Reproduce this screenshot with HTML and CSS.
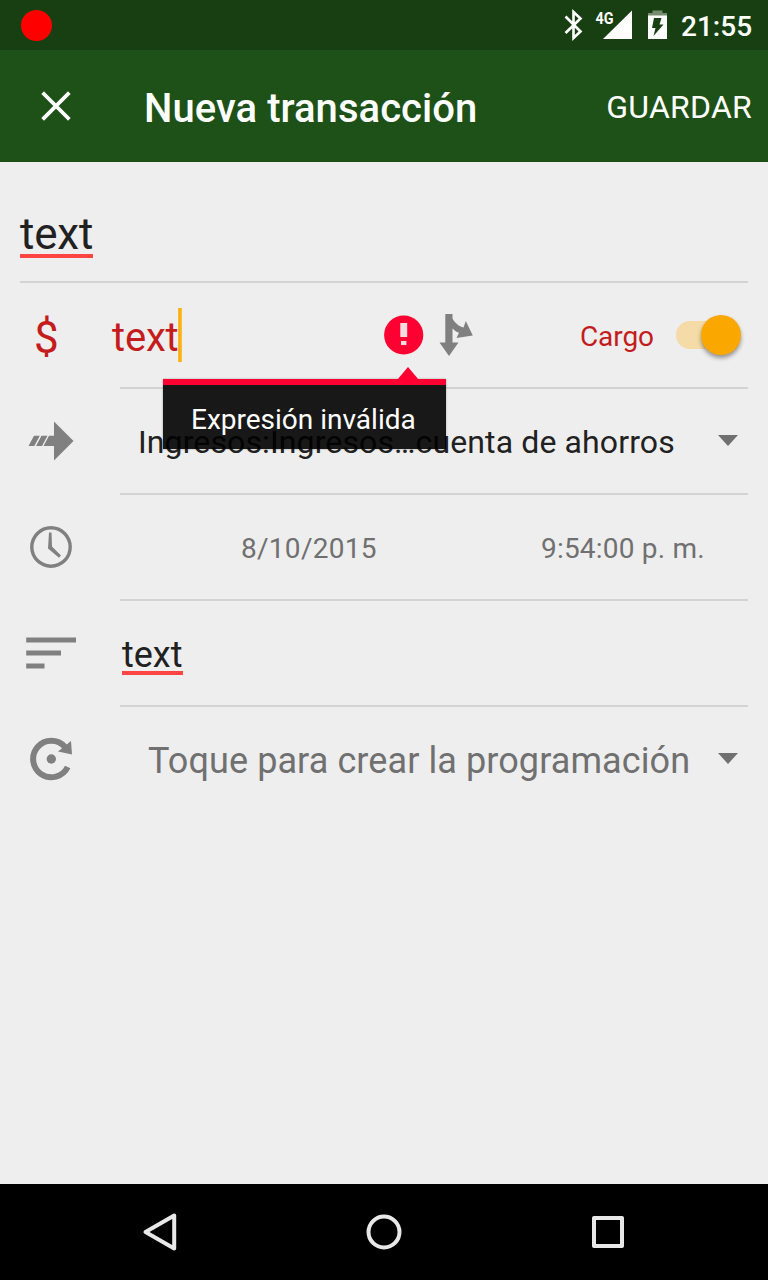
FILE: index.html
```html
<!DOCTYPE html>
<html lang="es">
<head>
<meta charset="utf-8">
<title>Nueva transacción</title>
<link rel="stylesheet" href="styles.css">
</head>
<body>
<div class="screen">
  <header class="status">
    <span class="record"></span>
    <svg class="status-icons" width="130" height="50" viewBox="548 0 130 50">
      <path d="M565.500 16.500 L580.500 31.500 L573.500 38 V12 L580.500 18.500 L565.500 33" fill="none" stroke="#fff" stroke-width="2.600"/>
      <path d="M632 10.500 V39 H603 Z" fill="#fff"/>
      <text class="network" x="595.500" y="23.500" textLength="18" lengthAdjust="spacingAndGlyphs">4G</text>
      <path d="M652.500 10.500 H662.500 V13 H667 V16 H648 V13 H652.500 Z" fill="#758c70"/>
      <path d="M648 15.500 H667 V39 H648 Z" fill="#fff"/>
      <path d="M654 18 H661.500 L659.500 24.500 H663.500 L653.500 36 L655.500 28 H652 Z" fill="#173f12"/>
    </svg>
    <span class="clock">21:55</span>
  </header>
  <div class="toolbar">
    <svg class="close" width="144" height="112" viewBox="0 50 144 112"><path d="M44 94 L68 118 M68 94 L44 118" stroke="#fff" stroke-width="3.800" stroke-linecap="square"/></svg>
    <h1 class="title">Nueva transacción</h1>
    <span class="save">GUARDAR</span>
  </div>
  <main class="form">
    <div class="row row-name"><span class="misspelled name">text</span></div>
    <div class="row row-amount">
      <span class="currency">$</span>
      <span class="amount">text</span><span class="caret"></span>
      <svg class="amount-icons" width="112" height="104" viewBox="376 283 112 104">
        <circle cx="403.700" cy="335" r="19.600" fill="#ff0033"/>
        <path d="M400.300 323 H407.200 V337 H400.300 Z M401 341 H406.400 V345 H401 Z" fill="#f3dce0"/>
        <path d="M445.300 314 H452.500 V318.500 C455 323 459 326.500 463.500 327.500 L465.800 321 L472.800 335.500 L456.500 338 L459 332.800 C456 331.800 454.500 330.500 452.500 328.500 V342.500 H458.500 L449 356 L439.500 342.500 H445.300 Z" fill="#808080"/>
      </svg>
      <span class="type">Cargo</span>
      <span class="switch"><span class="thumb"></span></span>
      <div class="error">
        <svg class="pointer" width="22" height="13" viewBox="0 0 22 13"><path d="M0 13 L11 0 L22 13 Z" fill="#ff0033"/></svg>
        Expresión inválida
      </div>
    </div>
    <div class="row">
      <svg class="icon" width="120" height="104" viewBox="0 389 120 104">
        <path d="M54 421.500 L73.500 441 L54 460.500 V446 H43.500 L49 435.700 H54 Z M34 435.700 H39.800 L34.300 446 H28.500 Z M41.500 435.700 H47.500 L42 446 H36 Z" fill="#808080"/>
      </svg>
      <span class="account">Ingresos:Ingresos…cuenta de ahorros</span>
      <span class="dropdown"></span>
    </div>
    <div class="row">
      <svg class="icon" width="120" height="104" viewBox="0 495 120 104">
        <circle cx="51" cy="547" r="19.200" fill="none" stroke="#808080" stroke-width="3.400"/>
        <path d="M49 532.500 H51.500 L52 546.500 L61 555.500 L59 557.800 L48 548.500 Z" fill="#808080"/>
      </svg>
      <span class="date">8/10/2015</span>
      <span class="time">9:54:00 p. m.</span>
    </div>
    <div class="row">
      <svg class="icon" width="120" height="104" viewBox="0 601 120 104"><path d="M26.200 637.500 H76 V642.500 H26.200 Z M26.200 650.500 H61 V655.500 H26.200 Z M26.200 663.500 H44.500 V668.500 H26.200 Z" fill="#808080"/></svg>
      <span class="misspelled note">text</span>
    </div>
    <div class="row row-last">
      <svg class="icon" width="120" height="104" viewBox="0 707 120 104">
        <path d="M65 747 A18.200 18.200 0 1 0 67.700 767" fill="none" stroke="#808080" stroke-width="6"/>
        <path d="M71 741 L72 754.500 L58 751.500 Z" fill="#808080"/>
        <circle cx="51.300" cy="759" r="4.700" fill="#808080"/>
      </svg>
      <span class="schedule">Toque para crear la programación</span>
      <span class="dropdown"></span>
    </div>
  </main>
  <nav class="navbar">
    <svg width="768" height="96" viewBox="0 1184 768 96" fill="none" stroke="#e8e8e8" stroke-width="4" stroke-linejoin="round">
      <path d="M174.200 1215.500 V1248.500 L145.500 1232 Z"/>
      <circle cx="384" cy="1232" r="15.500"/>
      <rect x="594" y="1218" width="28" height="28"/>
    </svg>
  </nav>
</div>
</body>
</html>
```
FILE: styles.css
```css
* { box-sizing: border-box; }
body { margin: 0; background: #eee; font-family: Roboto, sans-serif; }
span { white-space: nowrap; }
svg { display: block; flex: none; }
.screen { width: 768px; height: 1280px; display: flex; flex-direction: column; overflow: hidden; }
.status { height: 50px; background: #173f12; display: flex; align-items: center; }
.record { width: 31px; height: 31px; margin-left: 20.5px; border-radius: 50%; background: #f00; }
.status-icons { margin-left: auto; }
.network { font-size: 16.5px; font-weight: 700; fill: #fff; stroke: #173f12; stroke-width: 3px; paint-order: stroke; }
.clock { width: 90px; padding: 2px 0 0 3px; font-size: 28px; font-weight: 500; color: #fff; }
.toolbar { height: 112px; background: #1e5118; display: flex; align-items: center; color: #fff; padding-right: 16px; }
.title { margin: 4px 0 0; font-size: 40px; font-weight: 500; letter-spacing: .05px; white-space: nowrap; }
.save { margin: 2px 0 0 auto; font-size: 32px; letter-spacing: .25px; }
.form { flex: 1; }
.row { position: relative; height: 106px; padding-bottom: 2px; display: flex; align-items: center; color: #212121; }
.row::after { content: ""; position: absolute; left: 120px; right: 20px; bottom: 0; height: 2px; background: #d3d3d3; }
.row-name { height: 121px; padding: 22px 20px 0; }
.row-name::after { left: 20px; }
.row-last::after { display: none; }
.misspelled { position: relative; }
.misspelled::after { content: ""; position: absolute; left: 0; right: 0; height: 4px; background: #ff4444; }
.name { font-size: 44px; line-height: 52px; letter-spacing: -.2px; }
.name::after { bottom: 2px; }
.currency { width: 112px; padding: 5px 0 0 34px; font-size: 44px; color: #c41c1c; }
.amount { font-size: 40px; letter-spacing: -.2px; color: #c41c1c; padding-top: 5px; }
.row-amount { z-index: 1; }
.caret { width: 4px; height: 54px; background: linear-gradient(90deg, #fbc04d, #ffab00 40%, #fbc04d); }
.amount-icons { margin-left: auto; }
.type { width: 188px; padding: 3px 0 0 92px; font-size: 28px; letter-spacing: -.1px; color: #c41c1c; }
.switch { width: 64px; height: 28px; margin-right: 28px; border-radius: 14px; background: #f4dba8; display: flex; align-items: center; justify-content: flex-end; }
.thumb { width: 40px; height: 40px; flex: none; margin-right: -1px; border-radius: 50%; background: #faa700; box-shadow: 0 3px 4px rgba(0, 0, 0, .38); }
.error { position: absolute; z-index: 3; left: 163px; top: 96px; width: 283px; height: 70px; border-top: 6px solid #ff0033; background: rgba(0, 0, 0, .9); background-clip: padding-box; box-shadow: 0 0 2px rgba(0, 0, 0, .3); padding: 17px 0 0 28px; font-size: 28px; line-height: 36px; color: #fff; white-space: nowrap; }
.pointer { position: absolute; left: 234px; top: -18px; }
.account { padding: 1px 0 0 18px; font-size: 32px; letter-spacing: .12px; }
.dropdown { margin: 0 30px 2px auto; border: 10px solid transparent; border-top: 11px solid #707070; border-bottom: 0; }
.date { padding: 3px 0 0 121px; width: 421px; font-size: 28px; letter-spacing: .28px; color: #707070; }
.time { padding-top: 3px; font-size: 28px; letter-spacing: .2px; color: #707070; }
.note { margin: 4px 0 0 2px; font-size: 36px; line-height: 42px; }
.note::after { bottom: 1px; }
.schedule { padding: 4px 0 0 28px; font-size: 36px; letter-spacing: .09px; color: #707070; }
.navbar { height: 96px; background: #000; }
```
